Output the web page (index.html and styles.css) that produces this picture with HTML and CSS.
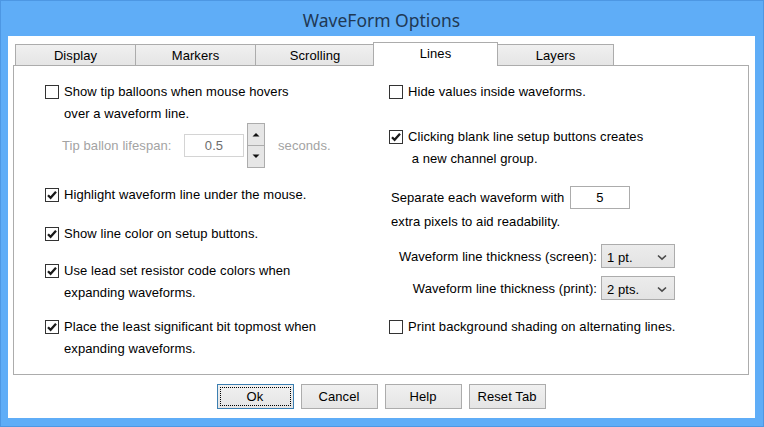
FILE: index.html
```html
<!DOCTYPE html>
<html>
<head>
<meta charset="utf-8">
<link rel="stylesheet" href="styles.css">
</head>
<body>
<div class="window">
  <div class="titlebar">WaveForm Options</div>
  <div class="client">
    <div class="tabs">
      <div class="tab tab-display">Display</div>
      <div class="tab tab-markers">Markers</div>
      <div class="tab tab-scrolling">Scrolling</div>
      <div class="tab tab-lines active">Lines</div>
      <div class="tab tab-layers">Layers</div>
    </div>
    <div class="panel">
      <div class="col col-left">
        <div class="opt opt-tips">
          <span class="box"></span>
          <span class="label">Show tip balloons when mouse hovers<br>over a waveform line.</span>
        </div>
        <div class="spin-row">
          <span class="spin-label">Tip ballon lifespan:</span>
          <span class="field field-disabled">0.5</span>
          <span class="spinner">
            <span class="spin-btn"><svg width="8" height="5" viewBox="0 0 8 5"><path d="M0.5 4.5 L4 1 L7.5 4.5 Z" fill="#111"/></svg></span>
            <span class="spin-btn"><svg width="8" height="5" viewBox="0 0 8 5"><path d="M0.5 0.5 L4 4 L7.5 0.5 Z" fill="#111"/></svg></span>
          </span>
          <span class="spin-unit">seconds.</span>
        </div>
        <div class="opt opt-highlight">
          <span class="box checked"><svg width="12" height="12" viewBox="0 0 12 12"><path d="M2 6.2 L4.6 8.8 L10 2.8" fill="none" stroke="#1a1a1a" stroke-width="2.3"/></svg></span>
          <span class="label">Highlight waveform line under the mouse.</span>
        </div>
        <div class="opt opt-color">
          <span class="box checked"><svg width="12" height="12" viewBox="0 0 12 12"><path d="M2 6.2 L4.6 8.8 L10 2.8" fill="none" stroke="#1a1a1a" stroke-width="2.3"/></svg></span>
          <span class="label">Show line color on setup buttons.</span>
        </div>
        <div class="opt opt-lead">
          <span class="box checked"><svg width="12" height="12" viewBox="0 0 12 12"><path d="M2 6.2 L4.6 8.8 L10 2.8" fill="none" stroke="#1a1a1a" stroke-width="2.3"/></svg></span>
          <span class="label">Use lead set resistor code colors when<br>expanding waveforms.</span>
        </div>
        <div class="opt opt-lsb">
          <span class="box checked"><svg width="12" height="12" viewBox="0 0 12 12"><path d="M2 6.2 L4.6 8.8 L10 2.8" fill="none" stroke="#1a1a1a" stroke-width="2.3"/></svg></span>
          <span class="label">Place the least significant bit topmost when<br>expanding waveforms.</span>
        </div>
      </div>
      <div class="col col-right">
        <div class="opt opt-hide">
          <span class="box"></span>
          <span class="label">Hide values inside waveforms.</span>
        </div>
        <div class="opt opt-blank">
          <span class="box checked"><svg width="12" height="12" viewBox="0 0 12 12"><path d="M2 6.2 L4.6 8.8 L10 2.8" fill="none" stroke="#1a1a1a" stroke-width="2.3"/></svg></span>
          <span class="label">Clicking blank line setup buttons creates<br>&nbsp;a new channel group.</span>
        </div>
        <div class="sep-row">
          <span class="sep-label">Separate each waveform with</span>
          <span class="field">5</span>
        </div>
        <div class="sep-note">extra pixels to aid readability.</div>
        <div class="sel-row sel-screen">
          <span class="sel-label">Waveform line thickness (screen):</span>
          <span class="select"><span>1 pt.</span><svg width="10" height="7" viewBox="0 0 10 7"><path d="M1 1.5 L5 5.2 L9 1.5" fill="none" stroke="#4a4a4a" stroke-width="1.6"/></svg></span>
        </div>
        <div class="sel-row sel-print">
          <span class="sel-label">Waveform line thickness (print):</span>
          <span class="select"><span>2 pts.</span><svg width="10" height="7" viewBox="0 0 10 7"><path d="M1 1.5 L5 5.2 L9 1.5" fill="none" stroke="#4a4a4a" stroke-width="1.6"/></svg></span>
        </div>
        <div class="opt opt-shade">
          <span class="box"></span>
          <span class="label">Print background shading on alternating lines.</span>
        </div>
      </div>
    </div>
    <div class="buttons">
      <div class="btn default"><span class="focus">Ok</span></div>
      <div class="btn">Cancel</div>
      <div class="btn">Help</div>
      <div class="btn">Reset Tab</div>
    </div>
  </div>
</div>
</body>
</html>
```
FILE: styles.css
```css
html, body {
  margin: 0;
  padding: 0;
}
body {
  width: 764px;
  height: 427px;
  overflow: hidden;
  background: #5fadf7;
  font-family: "Liberation Sans", Arial, sans-serif;
  font-size: 13px;
  letter-spacing: 0.08px;
  color: #000;
}
.window {
  box-sizing: border-box;
  width: 764px;
  height: 427px;
  border: 1px solid #4d97e3;
  display: flex;
  flex-direction: column;
  padding: 0 8px 8px 7px;
}
.titlebar {
  height: 35px;
  box-sizing: border-box;
  padding-top: 2px;
  display: flex;
  align-items: center;
  justify-content: center;
  font-family: "Noto Sans", sans-serif;
  font-size: 17.5px;
  letter-spacing: 0;
  color: #1f3955;
}
.client {
  flex: 1;
  background: #fff;
  padding: 6px 6px 0 5px;
  display: flex;
  flex-direction: column;
}
.tabs {
  display: flex;
  align-items: flex-end;
  height: 23px;
  padding-left: 2px;
}
.tab {
  box-sizing: border-box;
  height: 21px;
  border: 1px solid #acacac;
  border-bottom: none;
  background: linear-gradient(#f0f0f0, #e5e5e5);
  display: flex;
  align-items: center;
  justify-content: center;
  margin-left: -1px;
  padding-top: 1px;
}
.tab-display { width: 121px; margin-left: 0; }
.tab-markers { width: 121px; }
.tab-scrolling { width: 120px; }
.tab-lines { width: 125px; margin-left: -2px; }
.tab-layers { width: 117px; }
.tab.active {
  height: 24px;
  background: #fff;
  margin-bottom: -1px;
  position: relative;
  z-index: 2;
  padding-top: 0;
  padding-bottom: 2px;
}
.panel {
  box-sizing: border-box;
  height: 310px;
  border: 1px solid #acacac;
  display: grid;
  grid-template-columns: 344px 1fr;
  padding: 15px 0 0 31px;
}
.col {
  display: flex;
  flex-direction: column;
}
.opt {
  display: flex;
  align-items: flex-start;
  line-height: 22px;
}
.box {
  box-sizing: border-box;
  width: 14px;
  height: 14px;
  border: 1px solid #333;
  background: #fff;
  margin: 4px 5px 0 0;
  flex: none;
  display: flex;
  align-items: center;
  justify-content: center;
}
.opt-highlight { margin-top: 16px; }
.opt-color { margin-top: 17px; }
.opt-lead { margin-top: 15px; }
.opt-lsb { margin-top: 12px; }
.opt-blank { margin-top: 23px; }
.opt-shade { margin-top: 16px; }

.spin-row {
  display: flex;
  align-items: center;
  margin-top: -2px;
  height: 45px;
  color: #a3a3a3;
}
.spin-label {
  width: 122px;
  padding-left: 17px;
  box-sizing: content-box;
}
.field {
  box-sizing: border-box;
  width: 60px;
  height: 23px;
  border: 1px solid #acacac;
  background: #fff;
  display: flex;
  align-items: center;
  justify-content: center;
  color: #000;
}
.field-disabled {
  border-color: #d4d4d4;
  color: #6d6d6d;
}
.spinner {
  margin-left: 3px;
  width: 18px;
  height: 45px;
  display: flex;
  flex-direction: column;
}
.spin-btn {
  box-sizing: border-box;
  flex: 1;
  border: 1px solid #acacac;
  background: #e6e6e6;
  display: flex;
  align-items: center;
  justify-content: center;
}
.spin-btn + .spin-btn { margin-top: -1px; }
.spin-unit { margin-left: 13px; }

.sep-row {
  display: flex;
  align-items: center;
  margin-top: 16px;
  height: 23px;
}
.sep-label {
  width: 181px;
  padding-left: 2px;
  box-sizing: border-box;
}
.sep-note {
  line-height: 22px;
  margin-top: 2px;
  padding-left: 2px;
}
.sel-row {
  display: flex;
  align-items: center;
  height: 24px;
}
.sel-screen { margin-top: 11px; }
.sel-print { margin-top: 8px; }
.sel-label {
  width: 208px;
  text-align: right;
  margin-right: 4px;
}
.select {
  box-sizing: border-box;
  width: 74px;
  height: 24px;
  border: 1px solid #acacac;
  background: linear-gradient(#ececec, #e3e3e3);
  display: flex;
  align-items: center;
  justify-content: space-between;
  padding: 2px 7px 0 5px;
}
.buttons {
  display: flex;
  justify-content: center;
  gap: 7px;
  margin-top: 9px;
}
.btn {
  box-sizing: border-box;
  width: 77px;
  height: 25px;
  border: 1px solid #acacac;
  background: linear-gradient(#f0f0f0, #e5e5e5);
  display: flex;
  align-items: center;
  justify-content: center;
}
.btn.default {
  border-color: #3c7fb1;
  padding: 2px;
}
.focus {
  flex: 1;
  align-self: stretch;
  border: 1px dotted #000;
  display: flex;
  align-items: center;
  justify-content: center;
}
```
